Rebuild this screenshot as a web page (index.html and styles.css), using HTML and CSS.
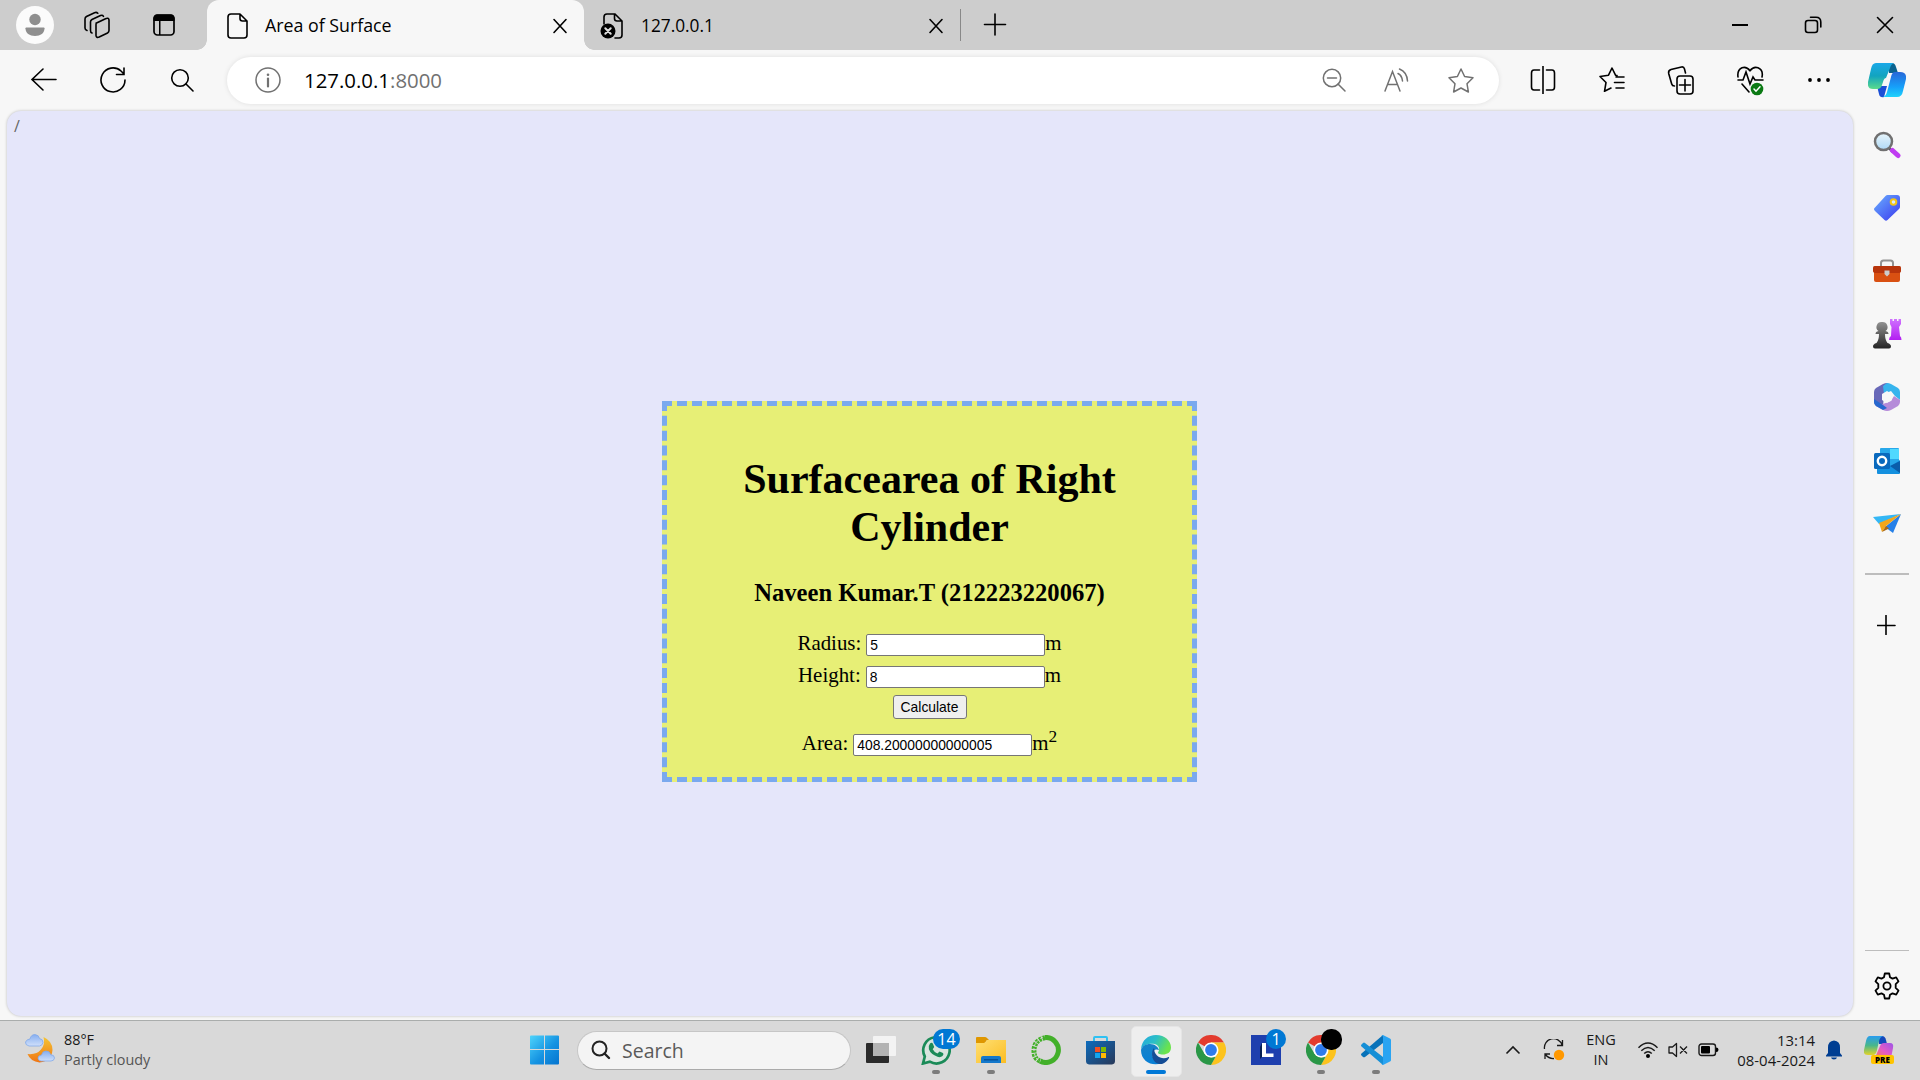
FILE: index.html
```
<!DOCTYPE html>
<html lang="en">
<head>
<meta charset="utf-8">
<title>Area of Surface</title>
<link rel="stylesheet" href="styles.css">
</head>
<body>
<div class="screen">
  <header class="tabbar">
    <div class="tab-tools">
      <svg class="i-avatar" width="38" height="38" viewBox="0 0 38 38"><circle cx="19" cy="19" r="19" fill="#fbfbfb"/><circle cx="19" cy="13.500" r="5.700" fill="#8f8f8f"/><path d="M10.200 21.500h17.600q.7 0 .7.800c0 5-4 7.700-9.500 7.700s-9.500-2.700-9.500-7.700q0-.8.700-.8z" fill="#8f8f8f"/></svg>
      <svg class="i-spaces line" width="28" height="28" viewBox="0 0 28 28"><path d="M12.500 12.500l10-4.800q3-1.300 3.500 1.200v10.600q0 1.500-1.500 2.500l-8.300 4q-3 1.200-3.200-1.500V13.500q0-1 .8-1.600z"/><path d="M9 22q-1.500-.5-1.500-2.500V11q0-1.600 1.500-2.500l8.500-4q2-.8 3 .8M4 19.500q-2-.6-2-2.500V8q0-1.600 1.500-2.500l8-3.800q2-.8 3.300.5"/></svg>
      <svg class="i-vtabs" width="24" height="24" viewBox="0 0 24 24"><rect x="2" y="2" width="20" height="20" rx="3.500" fill="none" stroke="#000" stroke-width="1.700"/><path d="M1.500 8V5.500Q1.500 1.500 5 1.500h14q3.500 0 3.500 4V8zM7 8h1.500v14H7z"/></svg>
    </div>
    <div class="tab active">
      <svg class="line" width="22" height="28" viewBox="0 0 22 28"><path d="M4 2h9l7 7v14q0 3-3 3H4q-3 0-3-3V5q0-3 3-3zM13 2v4.500Q13 9 15.500 9H20"/></svg>
      <span class="tab-title">Area of Surface</span>
      <svg class="tab-close line" width="16" height="16" viewBox="0 0 16 16"><path d="M2 1.500l12 13M14 1.500l-12 13"/></svg>
    </div>
    <div class="tab">
      <svg class="line" width="24" height="28" viewBox="0 0 24 28"><path d="M4 12V5q0-3 3-3h8l7 7v14q0 3-3 3h-4M14.500 2v4.500q0 2.500 2.500 2.500h5"/><circle cx="8" cy="19" r="7.500" fill="#000" stroke="none"/><path d="M5.300 16.300l5.400 5.400M10.700 16.300l-5.400 5.400" stroke="#ddd" stroke-width="2"/></svg>
      <span class="tab-title second">127.0.0.1</span>
      <svg class="tab-close line" width="16" height="16" viewBox="0 0 16 16"><path d="M2 1.500l12 13M14 1.500l-12 13"/></svg>
    </div>
    <div class="tab-divider"></div>
    <svg class="i-newtab line" width="24" height="24" viewBox="0 0 24 24"><path d="M1.500 11.500h21M12 1v21"/></svg>
    <div class="window-buttons">
      <svg width="18" height="18" viewBox="0 0 18 18"><path d="M1 8h16v2H1z"/></svg>
      <svg class="line" width="18" height="18" viewBox="0 0 18 18"><rect x="1.500" y="4.500" width="12" height="12" rx="2.500"/><path d="M6.500 1.300H12q4.800 0 4.800 4.800V11"/></svg>
      <svg class="line" width="18" height="18" viewBox="0 0 18 18"><path d="M1.500 1.500l15 15M16.500 1.500l-15 15"/></svg>
    </div>
  </header>

  <nav class="toolbar">
    <div class="tb-group left">
      <div class="tb-cell"><svg class="line" width="28" height="26" viewBox="0 0 28 26"><path d="M26 12.500H2M13 2L2 12.500 13 23"/></svg></div>
      <div class="tb-cell"><svg class="line" width="28" height="28" viewBox="0 0 28 28"><path d="M26 14a12 12 0 1 1-4-9l3 3M25 2v6.500h-7.500"/></svg></div>
      <div class="tb-cell"><svg class="line" width="26" height="26" viewBox="0 0 26 26"><circle cx="11" cy="11" r="8.300"/><path d="M17 17l7 7"/></svg></div>
    </div>
    <div class="address">
      <svg class="gray" width="28" height="28" viewBox="0 0 28 28"><circle cx="14" cy="14" r="12"/><path d="M14 12.500v8" stroke-width="2.200"/><circle cx="14" cy="8.700" r="1.300" fill="#717171" stroke="none"/></svg>
      <span class="url">127.0.0.1<span class="port">:8000</span></span>
      <div class="address-actions">
        <svg class="gray" width="26" height="26" viewBox="0 0 26 26"><circle cx="11" cy="11" r="8.700"/><path d="M17 17l7 7M6.500 11h9"/></svg>
        <svg class="gray" width="28" height="26" viewBox="0 0 28 26"><path d="M2 24L9.500 4.500 17 24M4.700 17.500h9.800M15 6.500q4 2 4.500 7.500M16.500 2q7.500 3 8 12"/></svg>
        <svg class="gray" width="28" height="26" viewBox="0 0 28 26"><path d="M14 2l3.600 7.500 8.400 1.200-6 6 1.400 8.300L14 21l-7.400 4L8 16.700l-6-6 8.400-1.200z" stroke-linejoin="round"/></svg>
      </div>
    </div>
    <div class="tb-group right">
      <div class="tb-cell"><svg class="line" width="28" height="28" viewBox="0 0 28 28"><path d="M14 0v28M10.500 4H5Q2.500 4 2.500 7v14q0 3 2.500 3h5.500M17.500 4H23q2.500 0 2.500 3v14q0 3-2.500 3h-5.500"/></svg></div>
      <div class="tb-cell"><svg class="line" width="28" height="28" viewBox="0 0 28 28"><path d="M19 9.500l-1.500-.3L14 2l-3.500 7.200L2 10.500l6 6-1.500 8.800L13 22M18 11h8M16.500 16.500H26M18 22h8" stroke-linejoin="round"/></svg></div>
      <div class="tb-cell"><svg class="line" width="28" height="30" viewBox="0 0 28 30"><rect x="10" y="11" width="16" height="18" rx="3"/><path d="M18 14.500v11.500M12.500 20h11M18.500 8l-1-4q-.7-2.500-3-2L4 4.500Q1 5.500 1.700 8.500l3 10.500q.5 2 2.800 2"/></svg></div>
      <div class="tb-cell"><svg class="line" width="28" height="32" viewBox="0 0 28 32"><path d="M2 13q-1-7 4-9.200 4.500-1.600 8 3 3.500-4.600 8-3Q27.500 6 26 13M2 16h5l3-8 4 12 3-7 2 3h8M6 20l7 8"/><circle cx="21" cy="25" r="6.300" fill="#0b7a14" stroke="none"/><path d="M18 25l2 2.200 4-4.400" stroke="#fff" stroke-width="1.500"/></svg></div>
      <div class="tb-cell"><svg width="24" height="6" viewBox="0 0 24 6"><circle cx="3" cy="3" r="1.900"/><circle cx="12" cy="3" r="1.900"/><circle cx="21" cy="3" r="1.900"/></svg></div>
    </div>
    <svg class="i-copilot" width="38" height="36" viewBox="0 0 38 36"><defs><linearGradient id="ca" x1="0" y1="0" x2="0" y2="1"><stop offset="0" stop-color="#1aa9e8"/><stop offset=".5" stop-color="#12a4bf"/><stop offset="1" stop-color="#5bdb8b"/></linearGradient><linearGradient id="cb" x1="0" y1="0" x2="0" y2="1"><stop offset="0" stop-color="#2867d8"/><stop offset=".6" stop-color="#16a0fa"/><stop offset="1" stop-color="#1fd2fb"/></linearGradient></defs><path d="M20 1h4q3 0 4 4l2 6h-9z" fill="#0b638f"/><path d="M9 24h10l-3 11q-4 1-5-3z" fill="#1a4fd6"/><path d="M8 1h18q-3 1-4 5l-4 10q-2 0-3 4l-1 3q-1 4-5 4H5q-6 0-5-7L3 7q1-6 5-6z" fill="url(#ca)"/><path d="M27 10h5q7 0 6 7l-3 12q-1 6-6 6H15q3-1 4-5l4-15q1-5 4-5z" fill="url(#cb)"/></svg>
  </nav>

  <div class="middle">
    <main class="page">
      <span class="path">/</span>
      <section class="card">
        <h1>Surfacearea of Right Cylinder</h1>
        <h3>Naveen Kumar.T (212223220067)</h3>
        <form class="calc">
          <div class="row"><label for="r">Radius:</label><input id="r" type="text" value="5">m</div>
          <div class="row"><label for="h">Height:</label><input id="h" type="text" value="8">m</div>
          <div class="row submit"><button type="button">Calculate</button></div>
          <div class="row"><label for="a">Area:</label><input id="a" type="text" value="408.20000000000005">m<span class="sq">2</span></div>
        </form>
      </section>
    </main>

    <aside class="sidebar">
      <div class="side-cell"><svg width="28" height="28" viewBox="0 0 28 28"><defs><linearGradient id="gl" x1="0" y1="0" x2="0" y2="1"><stop offset="0" stop-color="#e9f5fb"/><stop offset="1" stop-color="#aed9f5"/></linearGradient></defs><path d="M16 17l4 4" stroke="#555" stroke-width="2.500"/><path d="M19.500 19.500l5.500 5" stroke="#c03cf2" stroke-width="5" stroke-linecap="round"/><circle cx="10.500" cy="10.500" r="8.500" fill="url(#gl)" stroke="#707070" stroke-width="2.500"/></svg></div>
      <div class="side-cell"><svg width="28" height="28" viewBox="0 0 28 28"><defs><linearGradient id="tg" x1="0" y1="0" x2="1" y2="1"><stop offset="0" stop-color="#6ab0ff"/><stop offset="1" stop-color="#3a37ee"/></linearGradient></defs><path d="M14.500 1H24q3 0 3 3v9q0 1-1 2L14.500 26q-1.500 1.500-3 0L2 17q-2-2 0-3.500L12.500 2q1-1 2-1z" fill="url(#tg)"/><circle cx="20.500" cy="8" r="2.800" fill="#d8e8ff" stroke="#f2c416" stroke-width="2"/></svg></div>
      <div class="side-cell"><svg width="30" height="24" viewBox="0 0 30 24"><path d="M9 8V4q0-2.500 2.500-2.500h7Q21 1.500 21 4v4" fill="none" stroke="#929292" stroke-width="2"/><path d="M2 12h26v9q0 2-2 2H4q-2 0-2-2z" fill="#d95012"/><path d="M2.500 7h25Q29 7 29 8.500V12q0 2-3 2H4q-3 0-3-2V8.500Q1 7 2.500 7z" fill="#b8350c"/><path d="M12.500 11.500h5V15L15 17.500 12.500 15z" fill="#ccc"/></svg></div>
      <div class="side-cell"><svg width="30" height="32" viewBox="0 0 30 32"><defs><linearGradient id="pw" x1="0" y1="0" x2="0" y2="1"><stop offset="0" stop-color="#929292"/><stop offset="1" stop-color="#242424"/></linearGradient><linearGradient id="rk" x1="0" y1="0" x2="0" y2="1"><stop offset="0" stop-color="#cf72ff"/><stop offset="1" stop-color="#b31ff1"/></linearGradient></defs><path d="M18 1h2.500v2H22V1h3v2h1.500V1H29v5l-2 3 1 9q1.500 1 1.500 4H17q0-3 2-4l.5-9L18 6z" fill="url(#rk)"/><path d="M10 4a5 5 0 0 1 3.500 9q3 .5 3 3H13q0 6 2.500 9 3.500 1 3.500 3.500 0 2-2 2H3q-2 0-2-2Q1 26 4.500 25 7 22 7 16H3.500q0-2.500 3-3A5 5 0 0 1 10 4z" fill="url(#pw)"/></svg></div>
      <div class="side-cell"><svg width="28" height="30" viewBox="0 0 28 30"><path d="M14 1q-2 0-4 1L3 6Q1 7.500 1 10v10q0 2 2 4l7 2 1-16 9-5z" fill="#6868b8"/><path d="M14 1q2 0 4 1l7 4q2 1.500 2 4v8l-5-4-4-5-7 3-1-8z" fill="#36b4ed"/><path d="M27 18v2q0 2-2 4l-7 4q-4 2-8 0l-7-4 7-2 8-3 3-5z" fill="#b58bd9"/><path d="M3 24q-2-2-2-4v-3l9 6 4 3-4 2z" fill="#2668cf"/><path d="M14 9l5 3v6l-5 3-5-3v-6z" fill="#f7f7f7"/></svg></div>
      <div class="side-cell"><svg width="28" height="28" viewBox="0 0 28 28"><rect x="7" y="1" width="19" height="20" rx="1" fill="#28a8ea"/><path d="M17 2h9v10h-9z" fill="#50d9ff"/><path d="M4 14h5l9 5 9-6v13q0 1-1 1H5q-1 0-1-1z" fill="#1490df"/><path d="M27 14v12L17 19z" fill="#0a5daa"/><rect x="1" y="6" width="16" height="16" rx="1.500" fill="#0969bd"/><circle cx="9" cy="14" r="4.200" fill="none" stroke="#fff" stroke-width="2.400"/></svg></div>
      <div class="side-cell"><svg width="28" height="22" viewBox="0 0 28 22"><path d="M0 4L28 1 6 11z" fill="#34b7f5"/><path d="M28 1l-8 19-8-6z" fill="#2680e8"/><path d="M28 1L6 10l3 9 4-6z" fill="#f2a61b"/><path d="M9 19l4-6 3 2.500z" fill="#a96814"/></svg></div>
      <div class="side-rule thick"></div>
      <svg class="line i-add" width="20" height="20" viewBox="0 0 20 20"><path d="M0 10.500h18M9 .5v19"/></svg>
      <div class="side-rule"></div>
      <svg class="line i-gear" width="28" height="28" viewBox="0 0 28 28"><circle cx="14" cy="14" r="3.600"/><path d="M11.800 1.500h4.400l.8 3.700 2.500 1.400 3.700-1.200 2.300 4-2.800 2.700v3.800l2.800 2.700-2.300 4-3.700-1.200-2.500 1.400-.8 3.700h-4.400l-.8-3.700-2.500-1.400-3.700 1.200-2.300-4 2.800-2.700v-3.800L2.500 9.400l2.300-4 3.700 1.200L11 5.200z" stroke-linejoin="round"/></svg>
    </aside>
  </div>

  <footer class="taskbar">
    <div class="weather">
      <svg width="32" height="30" viewBox="0 0 32 30"><defs><linearGradient id="mn" x1="0" y1="0" x2="0" y2="1"><stop offset="0" stop-color="#f5c535"/><stop offset="1" stop-color="#ef7514"/></linearGradient><linearGradient id="cl" x1="0" y1="0" x2="0" y2="1"><stop offset="0" stop-color="#86aef0"/><stop offset="1" stop-color="#cfdffa"/></linearGradient></defs><path d="M19.500 3q9 4 9 13-1 11.500-13 12.500-9-1-12-8.500 9 1 13.500-4.500T19.500 3z" fill="url(#mn)"/><path d="M5 12q-4-1-3.500-4Q3 5 6 5q1-4.500 5-4.500 4 .5 4.500 4Q19 5 19 8.500q-.5 3-3.500 3.500z" fill="url(#cl)" stroke="#83a9e8" stroke-width=".8"/><path d="M17 27q-3-.5-3-3t3.500-3q1-4 4.500-4 4 0 4.500 3.500 4 .5 4 3.500-.5 3-3.500 3z" fill="url(#cl)" stroke="#83a9e8" stroke-width=".8"/></svg>
      <div class="weather-text"><span>88°F</span><span class="dim">Partly cloudy</span></div>
    </div>
    <svg class="i-start" width="30" height="30" viewBox="0 0 30 30"><defs><linearGradient id="wn" x1="0" y1="0" x2="30" y2="30" gradientUnits="userSpaceOnUse"><stop offset="0" stop-color="#4fd5fc"/><stop offset=".55" stop-color="#1593e2"/><stop offset="1" stop-color="#0472ce"/></linearGradient></defs><path d="M1 .5h13V14H0V1.500Q0 .5 1 .5zM15 .5h13q1 0 1 1V14H15zM0 15h14v14.500H1q-1 0-1-1zM15 15h14v13.500q0 1-1 1H15z" fill="url(#wn)"/></svg>
    <div class="search">
      <svg width="20" height="20" viewBox="0 0 20 20"><circle cx="8.500" cy="8.500" r="7" fill="none" stroke="#222" stroke-width="2"/><path d="M13.500 13.500l4.500 4.500" stroke="#222" stroke-width="2.400" stroke-linecap="round"/></svg>
      <span>Search</span>
    </div>
    <div class="apps">
      <div class="app"><svg width="30" height="30" viewBox="0 0 30 30"><rect y="8" width="23" height="20" rx="1" fill="#2b2b2b"/><rect x="7" y="1" width="23" height="20" rx="1" fill="#f3f3f3"/><path d="M7 8h16v13H8q-1 0-1-1z" fill="#b3b3b3"/></svg></div>
      <div class="app run"><svg width="30" height="30" viewBox="0 0 30 30"><path d="M2 28.500l1.800-7A13.200 13.200 0 1 1 8.800 26.700z" fill="#d9e5df" stroke="#1b8b58" stroke-width="2.700"/><path d="M9 8.500q2-1.500 3 .5l1.200 3-1.500 2.200q1.500 3 4.800 4.200l2-2 3.500 1.600q1.200 1.200-.5 3-2 1.800-5 .8-6.800-2.500-8.600-7.500-.8-3.500 1.100-5.800z" fill="#1b8b58"/></svg><span class="badge wide">14</span></div>
      <div class="app run"><svg width="30" height="30" viewBox="0 0 30 30"><defs><linearGradient id="fo" x1="0" y1="0" x2="1" y2="1"><stop offset="0" stop-color="#ffdf73"/><stop offset="1" stop-color="#fbbd22"/></linearGradient></defs><path d="M1 2h8q1 0 2 1l2 2h-2L8 9H0V3q0-1 1-1z" fill="#df9700"/><path d="M0 8h8q1.500 0 3-3h19v23H0z" fill="url(#fo)"/><path d="M5 28v-5q0-2 2-2h16q2 0 2 2v5z" fill="#1478cb"/><path d="M8 24h14v1.500H8z" fill="#07539a"/></svg></div>
      <div class="app"><svg width="30" height="30" viewBox="0 0 30 30"><path d="M14 2.500a12.500 12.500 0 1 1-5 23.500" fill="none" stroke="#43b02a" stroke-width="5"/><path d="M14 2.700Q3.500 5 3 15t8 11.500" fill="none" stroke="#43b02a" stroke-width="5" stroke-dasharray="2.600 1"/><path d="M12 2Q2 7 3 16t7 10" fill="none" stroke="#d9d9d9" stroke-width=".9" stroke-dasharray="3 2"/></svg></div>
      <div class="app"><svg width="30" height="30" viewBox="0 0 30 30"><defs><linearGradient id="st" x1="0" y1="0" x2="1" y2="1"><stop offset="0" stop-color="#0d6cbd"/><stop offset="1" stop-color="#293858"/></linearGradient></defs><path d="M8 7V3q0-1 1-1h11q1 0 1 1v4" fill="none" stroke="#2fc1f2" stroke-width="2"/><path d="M0 6h29v20q0 3-3 3.500H3Q0 29 0 26z" fill="url(#st)"/><path d="M9 12h5v5H9z" fill="#f25022"/><path d="M15 12h5v5h-5z" fill="#7fba00"/><path d="M9 18h5v5H9z" fill="#12a5ef"/><path d="M15 18h5v5h-5z" fill="#ffb901"/></svg></div>
      <div class="app current"><svg width="30" height="30" viewBox="0 0 30 30"><defs><linearGradient id="e1" x1="0" y1="0" x2="1" y2=".4"><stop offset="0" stop-color="#24a7e0"/><stop offset=".5" stop-color="#2bbfc7"/><stop offset="1" stop-color="#6ae34d"/></linearGradient><linearGradient id="e2" x1="0" y1="0" x2="0" y2="1"><stop offset="0" stop-color="#1783c8"/><stop offset="1" stop-color="#087fd6"/></linearGradient></defs><path d="M0 14C1 5 7 0 15 0c9 0 15 6 15 12.500 0 5-4 7-8 7-4 0-6-1-4.500-3 1.500-2.500.5-6.500-4-7.500C7 8 2 11 0 14z" fill="url(#e1)"/><path d="M0 15c1-4 5-6 9-6 5 0 8 3 9 6-6-3-9 6-4 10 3 3 7 3 7 3-9 4-21-1-21-13z" fill="url(#e2)"/><path d="M13 13c-4 5-2 17 8 16 3-1 6-4 7-6 .5-.8-.3-1.200-1-.8-3 1.600-8 1.300-11-1.700-2.200-2-3-5-3-7.500z" fill="#154d96"/></svg></div>
      <div class="app"><svg width="30" height="30" viewBox="0 0 30 30"><path d="M15 15L2 7.500A15 15 0 0 1 28 7.500H15z" fill="#e33b2e"/><path d="M15 7.500h13A15 15 0 0 1 15 30l6.500-11.500z" fill="#fcc31e"/><path d="M2 7.500l6.500 11.200L15 22.500l4.500-.5L15 30A15 15 0 0 1 2 7.500z" fill="#2a9747"/><circle cx="15" cy="15" r="7.500" fill="#fff"/><circle cx="15" cy="15" r="5.900" fill="#2f7bec"/></svg></div>
      <div class="app"><svg width="30" height="30" viewBox="0 0 30 30"><path fill="#1e3fae" d="M0 0h30v30H0z"/><path d="M11 8v14l-2 2V12z" fill="#071f55"/><path d="M11 8h4v10.500h7.500V22H11z" fill="#fff"/></svg><span class="badge">1</span></div>
      <div class="app run"><svg width="30" height="30" viewBox="0 0 30 30"><path d="M15 15L2 7.500A15 15 0 0 1 28 7.500H15z" fill="#e33b2e"/><path d="M15 7.500h13A15 15 0 0 1 15 30l6.500-11.500z" fill="#fcc31e"/><path d="M2 7.500l6.500 11.200L15 22.500l4.500-.5L15 30A15 15 0 0 1 2 7.500z" fill="#2a9747"/><circle cx="15" cy="15" r="7.500" fill="#fff"/><circle cx="15" cy="15" r="5.900" fill="#2f7bec"/></svg><span class="badge profile"></span></div>
      <div class="app run"><svg width="30" height="30" viewBox="0 0 30 30"><path d="M22 0v8L4 22q-1 .7-2 0l-1.500-1.500q-1-1 0-2z" fill="#0872b9"/><path d="M.5 9.500L2 8q1-1 2 0l18 14v8L.5 11.500q-1-1 0-2z" fill="#168fd6"/><path d="M22 0l7 3.500q1 .5 1 1.500v20q0 1-1 1.500L22 30q-1 0-1.500-1 1.500.7 1.500-1V2q0-1.500-1.500-1 .5-1 1.500-1z" fill="#2aa4f2"/></svg></div>
    </div>
    <div class="tray">
      <svg class="t-chev" width="16" height="10" viewBox="0 0 16 10"><path d="M1.500 8.500L8 2l6.500 6.500" fill="none" stroke="#1a1a1a" stroke-width="1.600"/></svg>
      <svg class="t-sync" width="22" height="22" viewBox="0 0 22 22"><path d="M1.500 10A9 9 0 0 1 19 6M19.500 1v5.500H14M11 19.500Q6 20 2.500 15.500M2 20v-5h5" fill="none" stroke="#1a1a1a" stroke-width="1.300"/><circle cx="16" cy="16" r="5.200" fill="#ff9800"/></svg>
      <div class="lang"><span>ENG</span><span>IN</span></div>
      <svg class="t-wifi" width="22" height="18" viewBox="0 0 22 18"><g fill="none" stroke="#1a1a1a" stroke-width="1.500"><path d="M1.500 6.800q9.500-9.500 19 0M4.300 9.700q6.700-6.500 13.400 0M7.200 12.500q3.800-3.600 7.600 0"/></g><circle cx="11" cy="15" r="2"/></svg>
      <svg class="t-vol" width="20" height="16" viewBox="0 0 20 16"><path d="M1 5h3.500L8.500 1.500v13L4.500 11H1zM12 4.500l7 7M19 4.500l-7 7" fill="none" stroke="#1a1a1a" stroke-width="1.300" stroke-linejoin="round"/></svg>
      <svg class="t-bat" width="21" height="14" viewBox="0 0 21 14"><rect x="1" y="1" width="16.500" height="11.500" rx="2.500" fill="none" stroke="#1a1a1a" stroke-width="1.400"/><rect x="3" y="3" width="9" height="7.500" rx="1"/><path d="M18 4.500q2.500 0 2.500 2.300T18 9z"/></svg>
      <div class="clock"><span>13:14</span><span>08-04-2024</span></div>
      <svg class="t-bell" width="18" height="20" viewBox="0 0 18 20"><path d="M9 .5q6 .5 6 7V13l2 2.500v1H1v-1L3 13V7.500q0-6.500 6-7zM6 17.500h6q-.5 2-3 2t-3-2z" fill="#003e92"/></svg>
      <div class="pre">
        <svg width="30" height="24" viewBox="0 0 30 24"><defs><linearGradient id="pa" x1="0" y1="0" x2="0" y2="1"><stop offset="0" stop-color="#289cf0"/><stop offset=".5" stop-color="#48b78a"/><stop offset="1" stop-color="#e3d32a"/></linearGradient><linearGradient id="pb" x1="1" y1="0" x2="0" y2="1"><stop offset="0" stop-color="#9c55e8"/><stop offset=".5" stop-color="#e45ac6"/><stop offset="1" stop-color="#fa814e"/></linearGradient></defs><path d="M14 0h4q3 0 4 4l1 4h-8z" fill="#1449bb"/><path d="M6 0h13q-3 1-4 5l-2 9q-1 5-4 5H4q-5 0-4-5L2 5q1-5 4-5z" fill="url(#pa)"/><path d="M20 7h6q4 0 3 5l-2 10H10q2-1 3-5l3-7q1-3 4-3z" fill="url(#pb)"/></svg>
        <span class="pre-tag">PRE</span>
      </div>
    </div>
  </footer>
</div>
</body>
</html>
```
FILE: styles.css
```
* { box-sizing: border-box; }
body { margin: 0; font-family: "Open Sans", "Noto Sans", sans-serif; color: #000; }
svg { display: block; flex: none; }
.line { fill: none; stroke: #000; stroke-width: 1.6; stroke-linecap: round; }
.gray { fill: none; stroke: #717171; stroke-width: 1.5; stroke-linecap: round; }

.screen { width: 1920px; height: 1080px; overflow: hidden; display: flex; flex-direction: column; background: #f7f7f7; }

/* Tab strip */
.tabbar { height: 50px; background: #cdcdcd; display: flex; align-items: center; }
.tab-tools { width: 207px; height: 50px; display: flex; align-items: center; padding-left: 16px; }
.i-spaces { margin-left: 29px; }
.i-vtabs { margin-left: 41px; }
.tab { width: 377px; height: 50px; display: flex; align-items: center; padding: 2px 16px 0 20px; }
.tab.active { background: #f7f7f7; border-radius: 12px 12px 0 0; position: relative; }
.tab.active::before, .tab.active::after { content: ""; position: absolute; bottom: 0; width: 10px; height: 10px; }
.tab.active::before { left: -10px; background: radial-gradient(circle at 0 0, #cdcdcd 9.5px, #f7f7f7 10px); }
.tab.active::after { right: -10px; background: radial-gradient(circle at 100% 0, #cdcdcd 9.5px, #f7f7f7 10px); }
.tab:not(.active) { padding-left: 16px; width: 376px; }
.tab-title { margin: 0 0 2px 16px; font-size: 17.8px; white-space: nowrap; }
.tab-title.second { margin-left: 17px; font-size: 17.300px; }
.tab-close { margin-left: auto; }
.tab-divider { width: 1px; height: 32px; background: #888; }
.i-newtab { margin-left: 22px; }
.window-buttons { margin-left: auto; display: flex; gap: 54.500px; padding-right: 26px; }

/* Address row */
.toolbar { height: 61px; display: flex; align-items: flex-start; padding: 7px 0 0 9px; }
.tb-group { height: 45px; display: flex; }
.left { width: 218px; }
.tb-cell { width: 69px; display: flex; align-items: center; justify-content: center; }
.address { width: 1272px; height: 47px; border-radius: 24px; background: #fff; box-shadow: 0 0 5px rgba(0,0,0,.1); display: flex; align-items: center; padding: 0 24px 1px 27px; }
.url { margin-left: 22px; font-size: 20.400px; white-space: nowrap; }
.port { color: #717171; }
.address-actions { margin-left: auto; display: flex; align-items: center; gap: 36px; }
.right { margin-left: 9px; }
.i-copilot { margin: 5px 0 0 15px; }

/* Viewport and side rail */
.middle { height: 909px; display: flex; }
.page { width: 1846px; height: 905px; margin-left: 7px; background: #e5e6fa; border-radius: 14px; box-shadow: 0 0 3px rgba(0,0,0,.25); display: flex; flex-direction: column; align-items: center; }
.path { align-self: flex-start; height: 20px; margin: 5px 0 0 7px; font-size: 16px; line-height: 20px; color: #666; }
.card { width: 535px; height: 381px; margin: 265px 1px 0 0; background: #e7ef76; border: 5px dashed #7aa9ee; font-family: "Liberation Serif", serif; font-size: 20.900px; text-align: center; padding: 49px 59px 0; }
h1 { margin: 0; font-size: 42px; line-height: 48px; }
h3 { margin: 28px 0 0; font-size: 24.600px; line-height: 28px; }
.calc { margin-top: 20px; }
.row { height: 32px; display: flex; justify-content: center; align-items: center; line-height: 32px; }
.row label { margin-right: 5px; }
.row input { width: 179px; height: 22px; margin: 3px 0 0; padding: 1px 3px; border: 1px solid #767676; border-radius: 2px; font: 13.870px "Liberation Sans", sans-serif; color: #000; background: #fff; }
.row.submit { height: 36px; align-items: flex-start; }
.row button { width: 74px; height: 24px; margin-top: 4px; padding: 0; border: 1px solid #767676; border-radius: 3px; background: #efefef; font: 13.870px "Liberation Sans", sans-serif; color: #000; }
.sq { font-size: 17.400px; margin-top: -15px; }

.sidebar { flex: 1; display: flex; flex-direction: column; align-items: center; padding-top: 2px; }
.side-cell { height: 63.200px; display: flex; align-items: center; justify-content: center; }
.side-rule { width: 44px; height: 1px; background: #bdbdbd; margin-top: 315px; }
.side-rule.thick { height: 2px; margin-top: 18px; }
.i-add { margin-top: 40px; }
.i-gear { margin-top: 21px; stroke-width: 1.8; }

/* Taskbar */
.taskbar { height: 60px; border-top: 1px solid #aaadac; background: #d9d9d9; display: flex; align-items: center; padding-bottom: 1px; }
.weather { width: 530px; display: flex; align-items: center; padding-left: 24px; }
.weather svg { margin-bottom: 3px; }
.weather-text, .lang, .clock { display: flex; flex-direction: column; font-size: 14.500px; line-height: 20px; white-space: nowrap; color: #1a1a1a; }
.weather-text { margin-left: 8px; font-size: 14.400px; }
.dim { color: #555; }
.weather-text .dim { color: #555; }
.search { width: 274px; height: 39px; margin-left: 17px; border: 1px solid #c6c6c6; border-bottom-color: #aaa; border-radius: 20px; background: #f4f4f4; display: flex; align-items: center; padding-left: 13px; font-size: 19.500px; color: #5a5a5a; }
.search span { margin-left: 11px; }
.apps { display: flex; height: 58px; margin-left: 2px; }
.app { width: 55px; display: flex; align-items: center; justify-content: center; position: relative; }
.run::after, .current::after { content: ""; position: absolute; bottom: 5px; width: 8px; height: 4px; border-radius: 2px; background: #7c7c7c; }
.current::before { content: ""; position: absolute; left: 3px; top: 5px; width: 49px; height: 49px; border-radius: 5px; background: #eee; border: 1px solid #e5e5e5; }
.current svg { position: relative; }
.current::after { width: 20px; background: #0078d7; }
.badge { position: absolute; left: 28px; top: 8px; width: 20px; height: 20px; border-radius: 10px; background: #0078d4; color: #fff; font-size: 16px; line-height: 20px; text-align: center; }
.badge.wide { left: 25px; width: 27px; }
.badge.profile { left: 28px; width: 21px; height: 21px; background: #000; }
.tray { flex: 1; display: flex; align-items: center; }
.t-chev { margin-left: 102px; }
.t-sync { margin-left: 22px; }
.lang { width: 40px; margin-left: 16px; align-items: center; }
.t-wifi { margin-left: 16px; }
.t-vol { margin-left: 9px; }
.t-bat { margin-left: 10px; }
.clock { width: 82px; margin-left: 14px; align-items: flex-end; font-size: 14.900px; }
.t-bell { margin-left: 10px; }
.pre { margin-left: 21px; display: flex; flex-direction: column; align-items: flex-end; }
.pre-tag { width: 23px; height: 9px; margin-top: -5px; background: #ffc400; border-radius: 2px; font-size: 8px; font-weight: 800; line-height: 9px; text-align: center; position: relative; }
```
